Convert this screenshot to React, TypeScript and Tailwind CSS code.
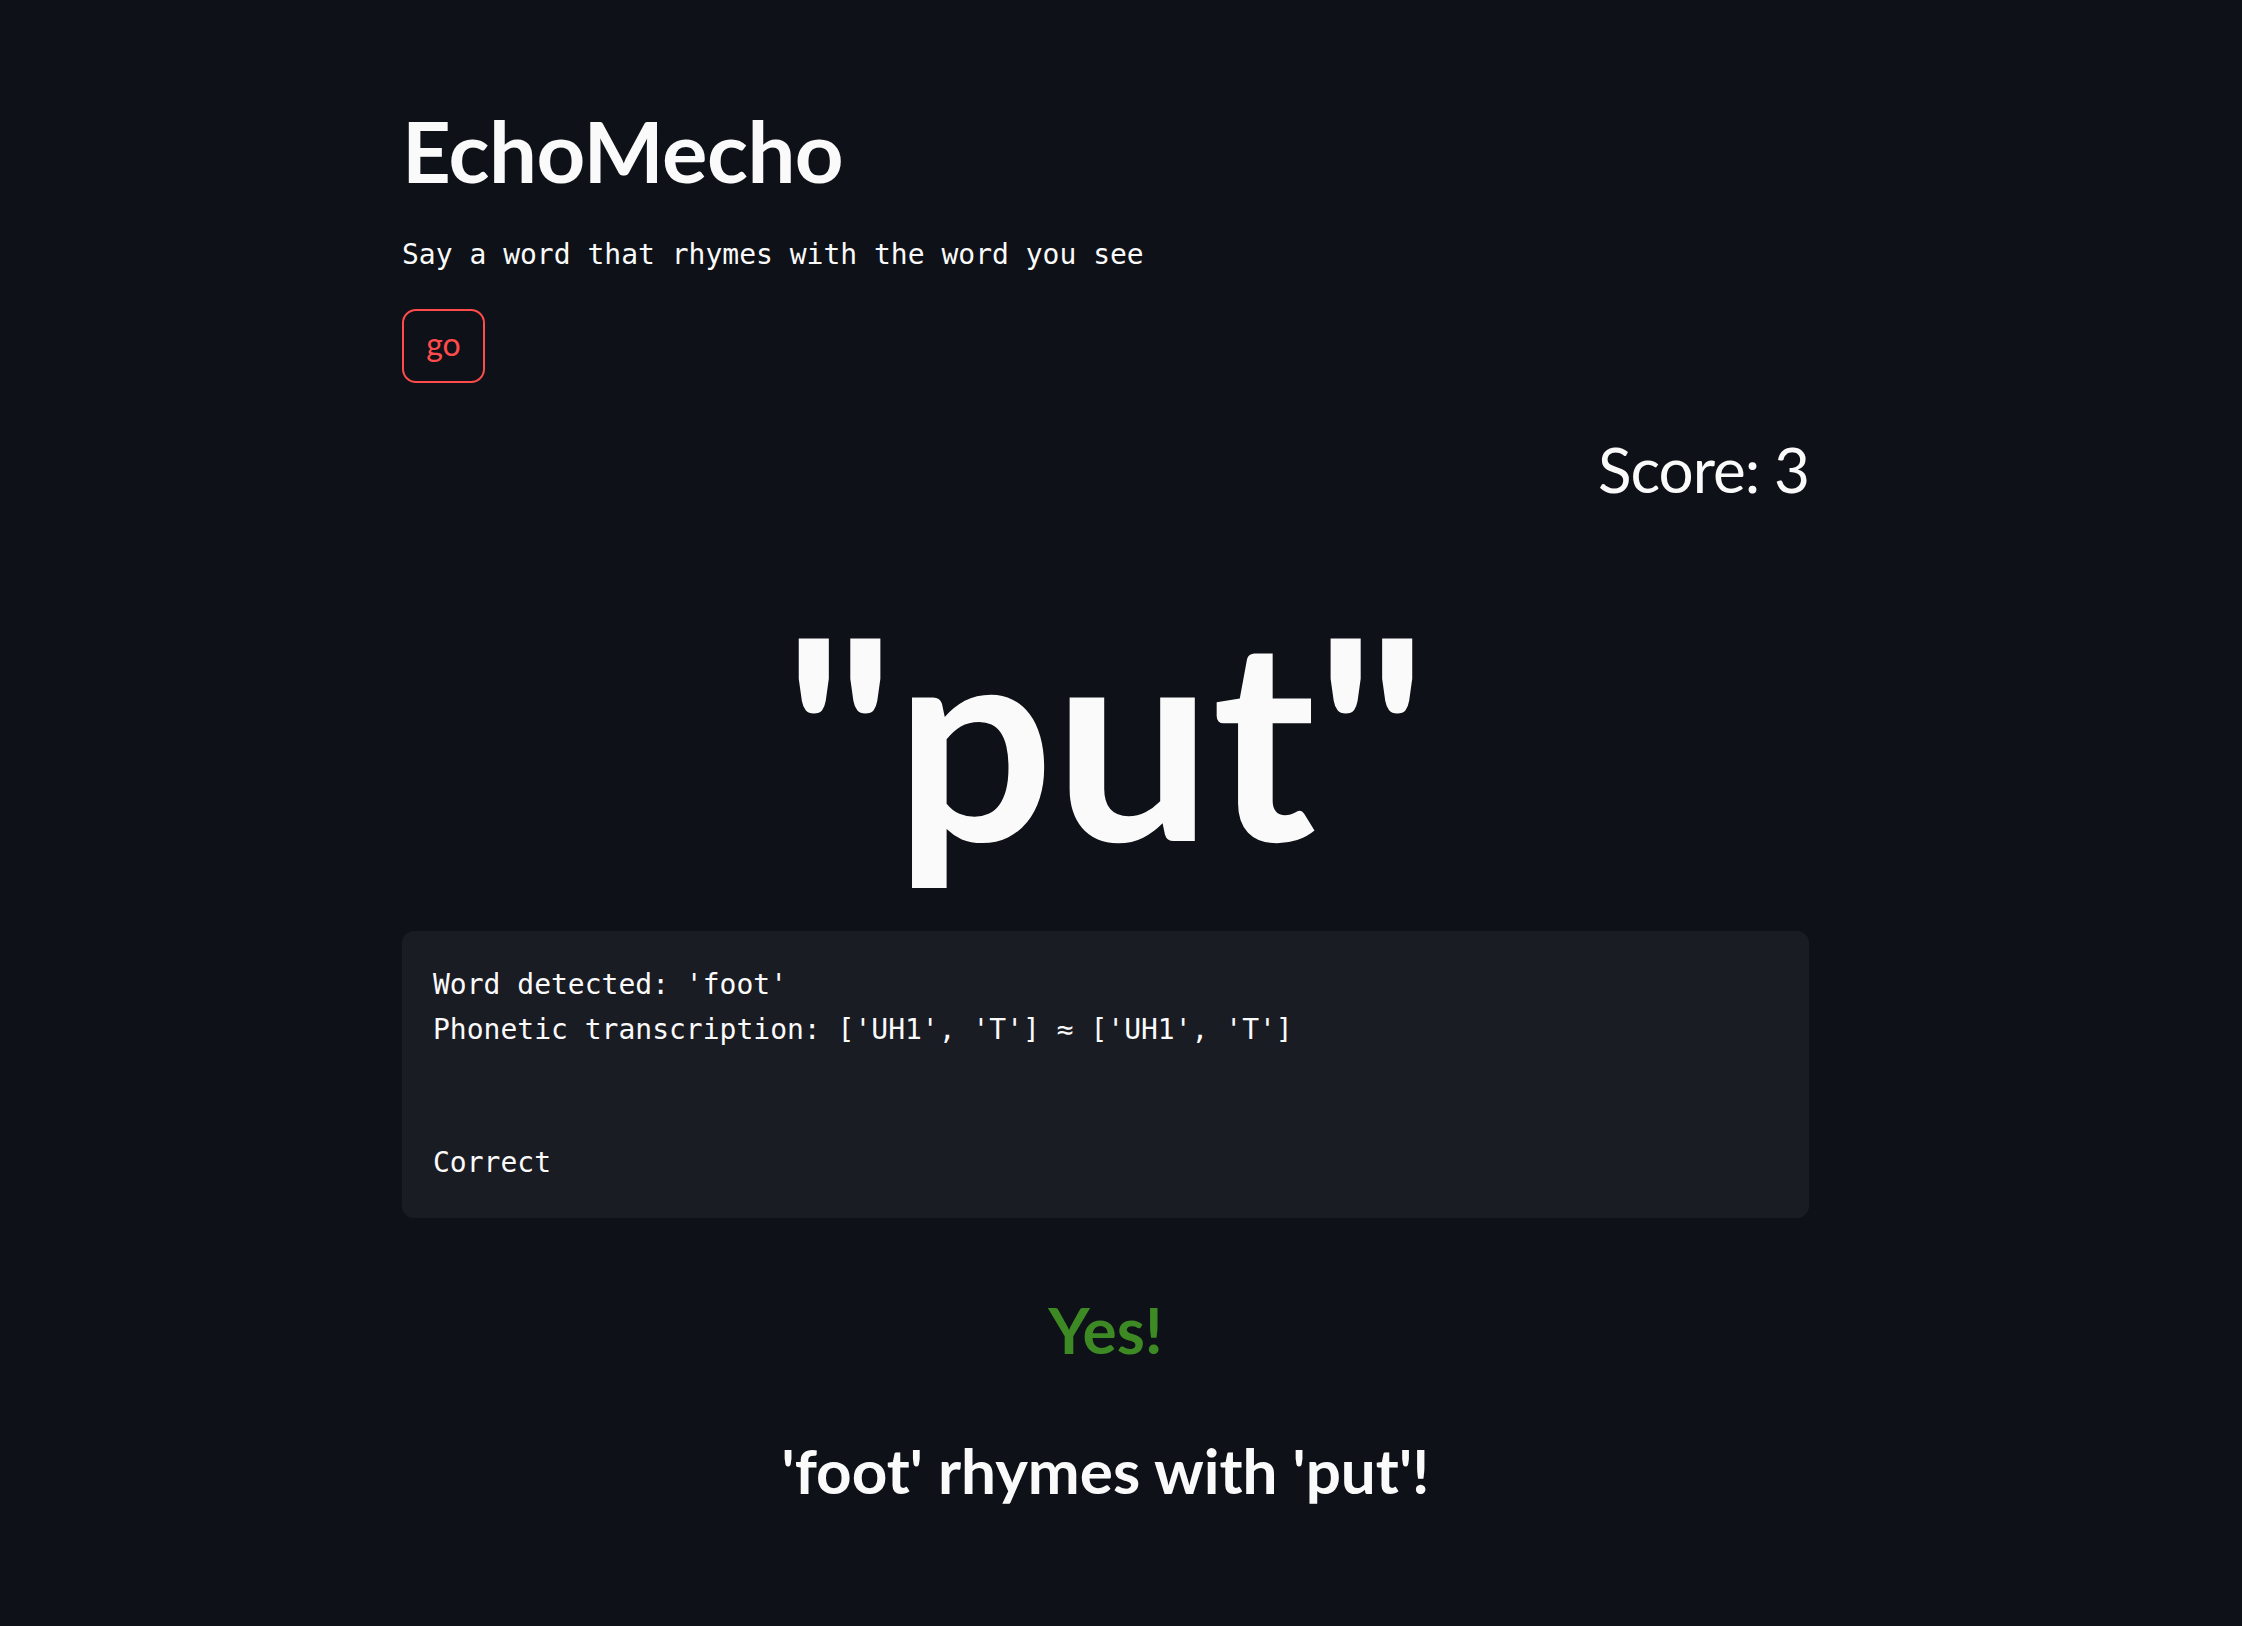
import React from 'react';

const sans = "font-['Lato','Noto_Sans',sans-serif]";
const mono = "font-['DejaVu_Sans_Mono','Liberation_Mono',monospace]";

export default function App() {
  return (
    <div className="min-h-[1626px] w-full bg-[#0e1117] text-[#fafafa]">
      <div className="ml-[402px] w-[1407px] pt-[100px]">
        <h1 className={`${sans} h-[100px] text-[85px] font-bold leading-[100px] tracking-[-0.5px]`}>
          EchoMecho
        </h1>
        <p className={`${mono} mt-[30px] h-[50px] text-[28px] leading-[50px]`}>
          Say a word that rhymes with the word you see
        </p>
        <button
          className={`${sans} mt-[29px] flex h-[74px] w-[83px] items-center justify-center rounded-[14px] border-2 border-[#ff4b4b] bg-[#0e1117] pb-1 text-[32px] text-[#ff4b4b]`}
        >
          go
        </button>
        <div className={`${sans} mt-[47px] h-[78px] text-right text-[62px] leading-[78px] tracking-[-1px]`}>
          Score: 3
        </div>
        <div className={`${sans} mt-[95px] flex h-[260px] items-center justify-center text-[280px] font-bold leading-[260px]`}>
          "put"
        </div>
        <div className={`${mono} mt-[68px] rounded-[12px] bg-[#1a1c24] px-[31px] py-[32px] text-[28px] leading-[44.6px] whitespace-pre`}>
          <div>Word detected: 'foot'</div>
          <div>Phonetic transcription: ['UH1', 'T'] ≈ ['UH1', 'T']</div>
          <div>{' '}</div>
          <div>{' '}</div>
          <div>Correct</div>
        </div>
        <div className={`${sans} mt-[72px] h-[80px] text-center text-[64px] font-bold leading-[80px] text-[#3d8a24]`}>
          Yes!
        </div>
        <div className={`${sans} mt-[60px] h-[80px] text-center text-[62px] font-bold leading-[80px]`}>
          'foot' rhymes with 'put'!
        </div>
      </div>
    </div>
  );
}
